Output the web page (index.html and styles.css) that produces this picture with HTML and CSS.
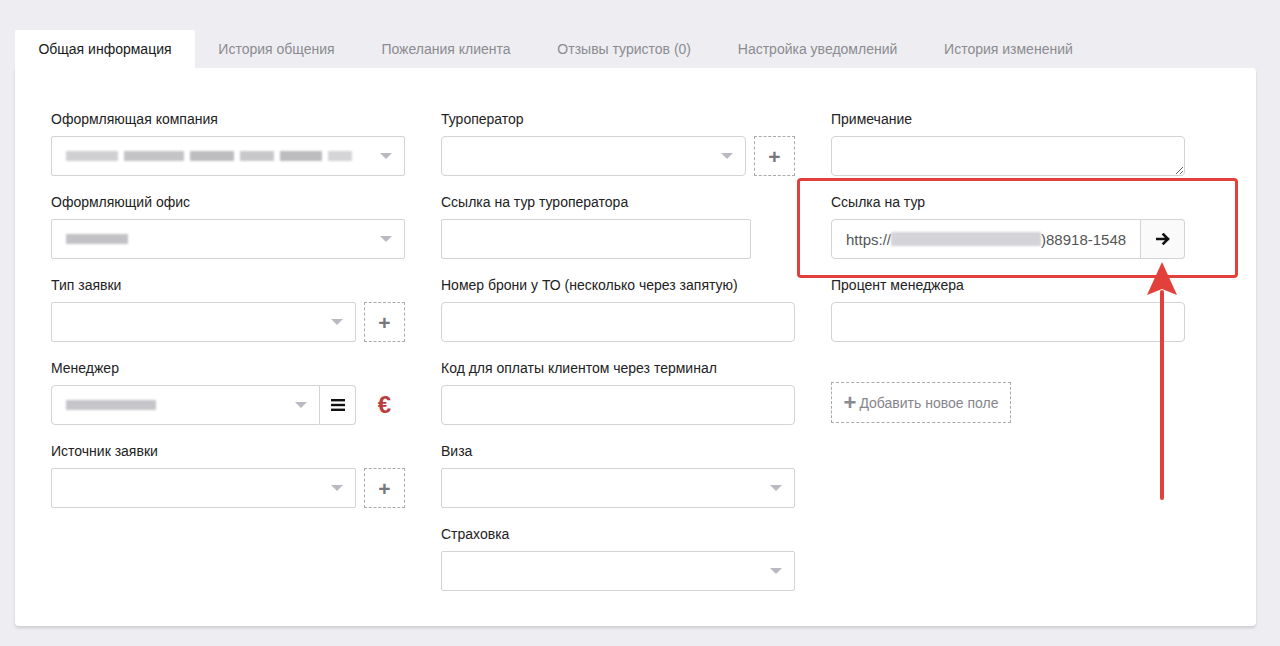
FILE: index.html
```html
<!DOCTYPE html>
<html lang="ru">
<head>
<meta charset="utf-8">
<title>Заявка</title>
<link rel="stylesheet" href="styles.css">
</head>
<body>
<div class="page">
  <nav class="tabs">
    <div class="tab active">Общая информация</div>
    <div class="tab">История общения</div>
    <div class="tab">Пожелания клиента</div>
    <div class="tab">Отзывы туристов (0)</div>
    <div class="tab">Настройка уведомлений</div>
    <div class="tab">История изменений</div>
  </nav>
  <section class="panel">
    <div class="col">
      <div class="field">
        <div class="label">Оформляющая компания</div>
        <div class="select">
          <span class="blur b1"></span><span class="blur b2"></span><span class="blur b3"></span><span class="blur b4"></span><span class="blur b5"></span><span class="blur b6"></span>
        </div>
      </div>
      <div class="field">
        <div class="label">Оформляющий офис</div>
        <div class="select"><span class="blur b7"></span></div>
      </div>
      <div class="field">
        <div class="label">Тип заявки</div>
        <div class="row">
          <div class="select w305"></div>
          <div class="addbtn">+</div>
        </div>
      </div>
      <div class="field">
        <div class="label">Менеджер</div>
        <div class="row">
          <div class="joined">
            <div class="select w269 left"><span class="blur b8"></span></div>
            <div class="menubtn">
              <svg width="14" height="12" viewBox="0 0 14 12"><rect x="0" y="0" width="14" height="2.4" fill="#111"/><rect x="0" y="4.8" width="14" height="2.4" fill="#111"/><rect x="0" y="9.6" width="14" height="2.4" fill="#111"/></svg>
            </div>
          </div>
          <div class="euro">€</div>
        </div>
      </div>
      <div class="field">
        <div class="label">Источник заявки</div>
        <div class="row">
          <div class="select w305"></div>
          <div class="addbtn">+</div>
        </div>
      </div>
    </div>

    <div class="col">
      <div class="field">
        <div class="label">Туроператор</div>
        <div class="row">
          <div class="select w305 round"></div>
          <div class="addbtn">+</div>
        </div>
      </div>
      <div class="field">
        <div class="label">Ссылка на тур туроператора</div>
        <div class="input w310"></div>
      </div>
      <div class="field">
        <div class="label">Номер брони у ТО (несколько через запятую)</div>
        <div class="input round"></div>
      </div>
      <div class="field">
        <div class="label">Код для оплаты клиентом через терминал</div>
        <div class="input round"></div>
      </div>
      <div class="field">
        <div class="label">Виза</div>
        <div class="select"></div>
      </div>
      <div class="field">
        <div class="label">Страховка</div>
        <div class="select"></div>
      </div>
    </div>

    <div class="col">
      <div class="field">
        <div class="label">Примечание</div>
        <textarea class="textarea"></textarea>
      </div>
      <div class="field">
        <div class="label">Ссылка на тур</div>
        <div class="joined">
          <div class="input w310 left url"><span>https://</span><span class="blur b9"></span><span class="tail">)88918-1548</span></div>
          <div class="gobtn">
            <svg width="14" height="12" viewBox="0 0 14 12"><path d="M1 6 H12 M7.5 1.5 L12 6 L7.5 10.5" fill="none" stroke="#111" stroke-width="2.5" stroke-linecap="square"/></svg>
          </div>
        </div>
      </div>
      <div class="field">
        <div class="label">Процент менеджера</div>
        <div class="input round"></div>
      </div>
      <div class="newfield"><span class="plus">+</span>Добавить новое поле</div>
    </div>

    <div class="mark"></div>
    <svg class="arrow" width="40" height="250" viewBox="0 0 40 250">
      <line x1="17" y1="30" x2="17" y2="236" stroke="#e2403a" stroke-width="4" stroke-linecap="round"/>
      <polygon points="17,0 32,33 17,27 2,33" fill="#e2403a"/>
    </svg>
  </section>
</div>
</body>
</html>
```

FILE: styles.css
```css
* { box-sizing: border-box; }
html, body { margin: 0; padding: 0; }
body {
  background: #eeeef2;
  font-family: "Liberation Sans", Arial, sans-serif;
  font-size: 14px;
  color: #222;
  width: 1280px;
  height: 646px;
  overflow: hidden;
}
.page { padding: 30px 24px 0 15px; }
.tabs { display: flex; height: 38px; }
.tab {
  padding: 0 23.4px;
  line-height: 38px;
  color: #8b8b90;
  font-size: 14px;
}
.tab.active { background: #fff; color: #1a1a1a; border-radius: 2px 2px 0 0; }
.panel {
  position: relative;
  width: 1241px;
  height: 558px;
  background: #fff;
  border-radius: 0 4px 4px 4px;
  box-shadow: 0 2px 3px rgba(0,0,0,0.14);
  padding: 41px 0 0 36px;
  display: grid;
  grid-template-columns: 354px 354px 354px;
  column-gap: 36px;
  align-items: start;
}
.field { margin-bottom: 16px; }
.label { height: 20px; line-height: 20px; margin-bottom: 7px; color: #222; }
.row { display: flex; gap: 8px; align-items: center; }
.joined { display: flex; }
.select, .input {
  position: relative;
  height: 40px;
  border: 1px solid #d2d2d7;
  border-radius: 2px;
  background: #fff;
  display: flex;
  align-items: center;
  padding: 0 14px;
  width: 100%;
}
.select::after {
  content: "";
  position: absolute;
  right: 12px;
  top: 16px;
  border-left: 6px solid transparent;
  border-right: 6px solid transparent;
  border-top: 6px solid #b9b9c1;
}
.round { border-radius: 4px; }
.w305 { width: 305px; flex: none; }
.w269 { width: 269px; flex: none; }
.w310 { width: 310px; flex: none; }
.left { border-radius: 4px 0 0 4px; }
.menubtn {
  width: 36px; height: 40px;
  border: 1px solid #d2d2d7; border-left: none;
  border-radius: 0 4px 4px 0;
  display: flex; align-items: center; justify-content: center;
  background: #fff;
}
.gobtn {
  width: 44px; height: 40px;
  border: 1px solid #d2d2d7; border-left: none;
  border-radius: 0 4px 4px 0;
  display: flex; align-items: center; justify-content: center;
  background: #fafafa;
}
.addbtn {
  width: 41px; height: 40px; flex: none;
  border: 1px dashed #a9a9b0;
  display: flex; align-items: center; justify-content: center;
  color: #77777f; font-size: 21px; font-weight: bold; line-height: 1;
}
.euro {
  width: 41px; text-align: center;
  color: #bb3c3c; font-size: 24px; line-height: 40px; font-weight: bold;
  font-family: "Liberation Sans", Arial, sans-serif;
}
.textarea {
  display: block;
  width: 354px; height: 40px;
  border: 1px solid #d2d2d7;
  border-radius: 4px;
  resize: vertical;
  margin: 0;
  font-family: inherit;
}
.url { padding: 0 14px; color: #555; font-size: 15px; white-space: nowrap; overflow: hidden; }
.newfield {
  margin-top: 40px;
  width: 180px; height: 41px;
  border: 1px dashed #a9a9b0;
  display: flex; align-items: center; justify-content: center;
  color: #85858c; font-size: 14px;
}
.newfield .plus { font-size: 22px; font-weight: bold; margin-right: 3px; line-height: 1; color: #8a8a92; }
.blur {
  display: inline-block;
  height: 10px;
  background: #c9c9cc;
  filter: blur(1.3px);
  margin-right: 6px;
}
.b1 { width: 52px; background: #d0d0d3; }
.b2 { width: 60px; background: #c4c4c7; }
.b3 { width: 44px; background: #bdbdc0; }
.b4 { width: 34px; background: #c8c8cb; }
.b5 { width: 42px; background: #bcbcbf; }
.b6 { width: 24px; background: #d5d5d8; }
.b7 { width: 62px; background: #c2c2c6; }
.b8 { width: 90px; background: #c6c6ca; }
.b9 { width: 150px; height: 14px; background: #d4d4d8; margin-right: 0; flex: none; }
.mark {
  position: absolute;
  left: 782px; top: 110px;
  width: 441px; height: 100px;
  border: 3px solid #e2403a;
  border-radius: 4px;
  pointer-events: none;
}
.arrow {
  position: absolute;
  left: 1130px; top: 194px;
}
```
